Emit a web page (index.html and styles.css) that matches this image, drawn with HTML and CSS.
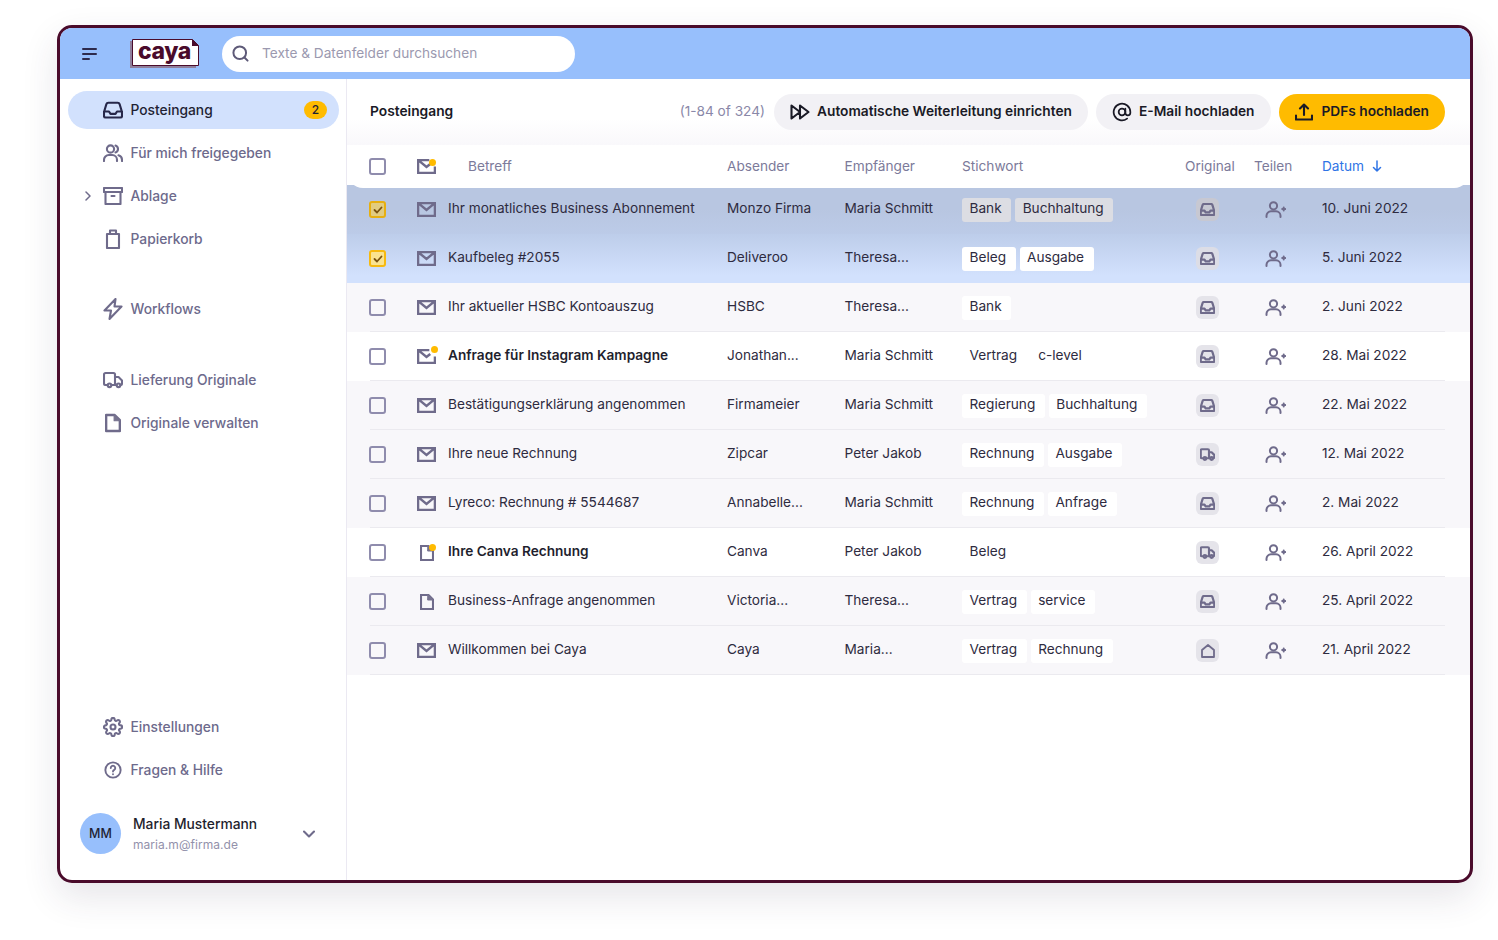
FILE: index.html
```html
<!DOCTYPE html>
<html lang="de">
<head>
<meta charset="utf-8">
<title>caya</title>
<link rel="stylesheet" href="styles.css">
</head>
<body>
<svg class="defs" width="0" height="0" aria-hidden="true">
  <symbol id="i-inbox" viewBox="0 0 20 17"><path d="M1 10.500 3.400 2.600A2 2 0 0 1 5.300 1.200h9.400a2 2 0 0 1 1.900 1.400L19 10.500v4a1.500 1.500 0 0 1-1.500 1.500h-15A1.500 1.500 0 0 1 1 14.500z M1 10h5l1.500 2.400h5L14 10h5"/></symbol>
  <symbol id="i-users" viewBox="0 0 20 18"><circle cx="7.500" cy="5" r="3.600"/><path d="M1 17v-1.200A4.800 4.800 0 0 1 5.800 11h3.400A4.800 4.800 0 0 1 14 15.800V17M12.500 1.500a3.700 3.700 0 0 1 0 7M15.500 11.300A4.800 4.800 0 0 1 19 15.800V17"/></symbol>
  <symbol id="i-archive" viewBox="0 0 20 18"><path d="M1 1h18v4H1zM2.500 5v12h15V5M8.500 9h3"/></symbol>
  <symbol id="i-trash" viewBox="0 0 16 20"><path d="M2 5h12v14H2zM5 5V1.500h6V5"/></symbol>
  <symbol id="i-bolt" viewBox="0 0 20 22"><path d="M12.500 1 1.500 12.500h6.500L6.500 21l12-12.500h-7z"/></symbol>
  <symbol id="i-truck" viewBox="0 0 20 16"><path d="M4.500 13H2.500A1.500 1.500 0 0 1 1 11.500v-9A1.500 1.500 0 0 1 2.500 1h8A1.500 1.500 0 0 1 12 2.500V13H8.500M12 5h3.500L19 8.500v3a1.500 1.500 0 0 1-1.500 1.500H17.500M13.500 13H12"/><circle cx="6.500" cy="13.300" r="1.800"/><circle cx="15.500" cy="13.300" r="1.800"/></symbol>
  <symbol id="i-doc" viewBox="0 0 14 16"><path d="M1 1h7.500L13 5.500V15H1z"/><path d="M8 1 13 6H8z" fill="#77738f" stroke="#77738f" stroke-width="1"/></symbol>
  <symbol id="i-gear" viewBox="0 0 24 24"><circle cx="12" cy="12" r="3"/><path d="M19.400 15a1.650 1.650 0 0 0 .33 1.820l.06.06a2 2 0 0 1 0 2.830 2 2 0 0 1-2.830 0l-.06-.06a1.650 1.650 0 0 0-1.820-.33 1.650 1.650 0 0 0-1 1.510V21a2 2 0 0 1-2 2 2 2 0 0 1-2-2v-.09A1.650 1.650 0 0 0 9 19.400a1.650 1.650 0 0 0-1.820.33l-.06.06a2 2 0 0 1-2.830 0 2 2 0 0 1 0-2.830l.06-.06a1.650 1.650 0 0 0 .33-1.820 1.650 1.650 0 0 0-1.510-1H3a2 2 0 0 1-2-2 2 2 0 0 1 2-2h.09A1.650 1.650 0 0 0 4.600 9a1.650 1.650 0 0 0-.33-1.820l-.06-.06a2 2 0 0 1 0-2.830 2 2 0 0 1 2.830 0l.06.06a1.650 1.650 0 0 0 1.820.33H9a1.650 1.650 0 0 0 1-1.510V3a2 2 0 0 1 2-2 2 2 0 0 1 2 2v.09a1.650 1.650 0 0 0 1 1.510 1.650 1.650 0 0 0 1.820-.33l.06-.06a2 2 0 0 1 2.830 0 2 2 0 0 1 0 2.830l-.06.06a1.650 1.650 0 0 0-.33 1.820V9a1.650 1.650 0 0 0 1.510 1H21a2 2 0 0 1 2 2 2 2 0 0 1-2 2h-.09a1.650 1.650 0 0 0-1.510 1z"/></symbol>
  <symbol id="i-help" viewBox="0 0 20 20"><circle cx="10" cy="10" r="8.500"/><path d="M7.500 7.800a2.500 2.500 0 1 1 3.800 2.100c-.9.500-1.300 1-1.300 1.900M10 14.600v.1"/></symbol>
  <symbol id="i-mail" viewBox="0 0 20 16"><path d="M1 1h18v14H1zM1.500 1.500 10 8.500l8.500-7"/></symbol>
  <symbol id="i-mailnew" viewBox="0 0 20 16"><path d="M13 1H1v14h18V8M1.500 1.500 10 8.500l4-3.200"/></symbol>
  <symbol id="i-userplus" viewBox="0 0 21 17"><circle cx="8.500" cy="4.800" r="3.600"/><path d="M1.500 16v-1.200A4.500 4.500 0 0 1 6 10.300h5a4.500 4.500 0 0 1 4.500 4.500V16M18.700 6.500v3M17.200 8h3"/></symbol>
  <symbol id="i-home" viewBox="0 0 14 14"><path d="M1 6 7 1l6 5v7H1z"/></symbol>
  <symbol id="i-forward" viewBox="0 0 20 16"><path d="M1.500 1.500 10 8l-8.500 6.500zM10 1.500 18.500 8 10 14.500z"/></symbol>
  <symbol id="i-at" viewBox="0 0 24 24"><circle cx="12" cy="12" r="4"/><path d="M16 8v5a3 3 0 0 0 6 0v-1a10 10 0 1 0-3.920 7.940"/></symbol>
  <symbol id="i-upload" viewBox="0 0 18 18"><path d="M9 12V2M5 5.500 9 1.500l4 4M1 12.500V16.500h16V12.500"/></symbol>
</svg>

<div class="app">
  <header class="topbar">
    <button class="menu-btn" type="button" aria-label="Menü"><span></span><span></span><span class="short"></span></button>
    <div class="logo">
      <svg class="logo-sheet" viewBox="0 0 70 31" aria-hidden="true">
        <path class="sheet-back" d="M0 3h3v25h63v2H0z"/>
        <path class="sheet-front" d="M2.500 1.500h60l6 6v20h-66z"/>
        <path class="sheet-fold" d="M62 1 69 8h-7z"/>
      </svg>
      <span class="logo-text">caya</span>
    </div>
    <div class="search">
      <svg class="icon search-icon" viewBox="0 0 18 18"><circle cx="8.200" cy="8.200" r="6.700"/><path d="m13.200 13.200 3.300 3.300"/></svg>
      <span class="search-text">Texte &amp; Datenfelder durchsuchen</span>
    </div>
  </header>

  <div class="body">
    <aside class="sidebar">
      <nav class="nav-group">
        <a class="nav-item active"><svg class="icon nav-icon"><use href="#i-inbox"/></svg><span>Posteingang</span><b class="count">2</b></a>
        <a class="nav-item"><svg class="icon nav-icon"><use href="#i-users"/></svg><span>Für mich freigegeben</span></a>
        <a class="nav-item"><svg class="icon caret" viewBox="0 0 6 10"><path d="m1 1 4 4-4 4"/></svg><svg class="icon nav-icon"><use href="#i-archive"/></svg><span>Ablage</span></a>
        <a class="nav-item"><svg class="icon nav-icon narrow"><use href="#i-trash"/></svg><span>Papierkorb</span></a>
      </nav>
      <nav class="nav-group wide-gap">
        <a class="nav-item"><svg class="icon nav-icon tall"><use href="#i-bolt"/></svg><span>Workflows</span></a>
      </nav>
      <nav class="nav-group">
        <a class="nav-item"><svg class="icon nav-icon"><use href="#i-truck"/></svg><span>Lieferung Originale</span></a>
        <a class="nav-item"><svg class="icon nav-icon narrow"><use href="#i-doc"/></svg><span>Originale verwalten</span></a>
      </nav>
      <nav class="nav-group bottom">
        <a class="nav-item"><svg class="icon nav-icon gear"><use href="#i-gear"/></svg><span>Einstellungen</span></a>
        <a class="nav-item"><svg class="icon nav-icon"><use href="#i-help"/></svg><span>Fragen &amp; Hilfe</span></a>
      </nav>
      <div class="user">
        <div class="avatar">MM</div>
        <div class="user-text">
          <div class="user-name">Maria Mustermann</div>
          <div class="user-mail">maria.m@firma.de</div>
        </div>
        <svg class="icon chevron" viewBox="0 0 12 8"><path d="m1 1.500 5 5 5-5"/></svg>
      </div>
    </aside>

    <main class="main">
      <div class="toolbar">
        <h1 class="title">Posteingang</h1>
        <span class="range">(1-84 of 324)</span>
        <button class="btn" type="button"><svg class="icon btn-forward"><use href="#i-forward"/></svg><span class="btn-label">Automatische Weiterleitung einrichten</span></button>
        <button class="btn" type="button"><svg class="icon btn-at"><use href="#i-at"/></svg><span class="btn-label">E-Mail hochladen</span></button>
        <button class="btn primary" type="button"><svg class="icon btn-up"><use href="#i-upload"/></svg><span class="btn-label">PDFs hochladen</span></button>
      </div>

      <div class="table">
        <div class="row head">
          <span class="check"></span>
          <span class="type"><svg class="icon mail"><use href="#i-mailnew"/></svg><i class="dot"></i></span>
          <span class="subject-head">Betreff</span>
          <span>Absender</span>
          <span>Empfänger</span>
          <span>Stichwort</span>
          <span>Original</span>
          <span>Teilen</span>
          <span class="sorted">Datum <svg class="icon sort" viewBox="0 0 10 12"><path d="M5 1v10M1.500 7.500 5 11l3.500-3.500"/></svg></span>
        </div>

        <div class="row sel-a">
          <span class="check on"><svg class="tick" viewBox="0 0 10 8"><path d="m1.500 4 2.500 2.500 4.500-5"/></svg></span>
          <span class="type"><svg class="icon mail"><use href="#i-mail"/></svg></span>
          <span>Ihr monatliches Business Abonnement</span>
          <span>Monzo Firma</span>
          <span>Maria Schmitt</span>
          <span class="tags"><em>Bank</em><em>Buchhaltung</em></span>
          <span><span class="orig"><svg class="icon"><use href="#i-inbox"/></svg></span></span>
          <span class="share"><svg class="icon"><use href="#i-userplus"/></svg></span>
          <span>10. Juni 2022</span>
        </div>
        <div class="row sel-b">
          <span class="check on"><svg class="tick" viewBox="0 0 10 8"><path d="m1.500 4 2.500 2.500 4.500-5"/></svg></span>
          <span class="type"><svg class="icon mail"><use href="#i-mail"/></svg></span>
          <span>Kaufbeleg #2055</span>
          <span>Deliveroo</span>
          <span>Theresa...</span>
          <span class="tags"><em>Beleg</em><em>Ausgabe</em></span>
          <span><span class="orig"><svg class="icon"><use href="#i-inbox"/></svg></span></span>
          <span class="share"><svg class="icon"><use href="#i-userplus"/></svg></span>
          <span>5. Juni 2022</span>
        </div>
        <div class="row">
          <span class="check"></span>
          <span class="type"><svg class="icon mail"><use href="#i-mail"/></svg></span>
          <span>Ihr aktueller HSBC Kontoauszug</span>
          <span>HSBC</span>
          <span>Theresa...</span>
          <span class="tags"><em>Bank</em></span>
          <span><span class="orig"><svg class="icon"><use href="#i-inbox"/></svg></span></span>
          <span class="share"><svg class="icon"><use href="#i-userplus"/></svg></span>
          <span>2. Juni 2022</span>
        </div>
        <div class="row unread">
          <span class="check"></span>
          <span class="type"><svg class="icon mail"><use href="#i-mailnew"/></svg><i class="dot"></i></span>
          <span class="strong">Anfrage für Instagram Kampagne</span>
          <span>Jonathan...</span>
          <span>Maria Schmitt</span>
          <span class="tags"><em>Vertrag</em><em>c-level</em></span>
          <span><span class="orig"><svg class="icon"><use href="#i-inbox"/></svg></span></span>
          <span class="share"><svg class="icon"><use href="#i-userplus"/></svg></span>
          <span>28. Mai 2022</span>
        </div>
        <div class="row">
          <span class="check"></span>
          <span class="type"><svg class="icon mail"><use href="#i-mail"/></svg></span>
          <span>Bestätigungserklärung angenommen</span>
          <span>Firmameier</span>
          <span>Maria Schmitt</span>
          <span class="tags"><em>Regierung</em><em>Buchhaltung</em></span>
          <span><span class="orig"><svg class="icon"><use href="#i-inbox"/></svg></span></span>
          <span class="share"><svg class="icon"><use href="#i-userplus"/></svg></span>
          <span>22. Mai 2022</span>
        </div>
        <div class="row">
          <span class="check"></span>
          <span class="type"><svg class="icon mail"><use href="#i-mail"/></svg></span>
          <span>Ihre neue Rechnung</span>
          <span>Zipcar</span>
          <span>Peter Jakob</span>
          <span class="tags"><em>Rechnung</em><em>Ausgabe</em></span>
          <span><span class="orig"><svg class="icon"><use href="#i-truck"/></svg></span></span>
          <span class="share"><svg class="icon"><use href="#i-userplus"/></svg></span>
          <span>12. Mai 2022</span>
        </div>
        <div class="row">
          <span class="check"></span>
          <span class="type"><svg class="icon mail"><use href="#i-mail"/></svg></span>
          <span>Lyreco: Rechnung # 5544687</span>
          <span>Annabelle...</span>
          <span>Maria Schmitt</span>
          <span class="tags"><em>Rechnung</em><em>Anfrage</em></span>
          <span><span class="orig"><svg class="icon"><use href="#i-inbox"/></svg></span></span>
          <span class="share"><svg class="icon"><use href="#i-userplus"/></svg></span>
          <span>2. Mai 2022</span>
        </div>
        <div class="row unread">
          <span class="check"></span>
          <span class="type"><svg class="icon docicon"><use href="#i-doc"/></svg><i class="dot"></i></span>
          <span class="strong">Ihre Canva Rechnung</span>
          <span>Canva</span>
          <span>Peter Jakob</span>
          <span class="tags"><em>Beleg</em></span>
          <span><span class="orig"><svg class="icon"><use href="#i-truck"/></svg></span></span>
          <span class="share"><svg class="icon"><use href="#i-userplus"/></svg></span>
          <span>26. April 2022</span>
        </div>
        <div class="row">
          <span class="check"></span>
          <span class="type"><svg class="icon docicon"><use href="#i-doc"/></svg></span>
          <span>Business-Anfrage angenommen</span>
          <span>Victoria...</span>
          <span>Theresa...</span>
          <span class="tags"><em>Vertrag</em><em>service</em></span>
          <span><span class="orig"><svg class="icon"><use href="#i-inbox"/></svg></span></span>
          <span class="share"><svg class="icon"><use href="#i-userplus"/></svg></span>
          <span>25. April 2022</span>
        </div>
        <div class="row">
          <span class="check"></span>
          <span class="type"><svg class="icon mail"><use href="#i-mail"/></svg></span>
          <span>Willkommen bei Caya</span>
          <span>Caya</span>
          <span>Maria...</span>
          <span class="tags"><em>Vertrag</em><em>Rechnung</em></span>
          <span><span class="orig"><svg class="icon home"><use href="#i-home"/></svg></span></span>
          <span class="share"><svg class="icon"><use href="#i-userplus"/></svg></span>
          <span>21. April 2022</span>
        </div>
      </div>
    </main>
  </div>
</div>
</body>
</html>
```

FILE: styles.css
```css
* { box-sizing: border-box; }
html, body { margin: 0; height: 100%; }
body {
  padding: 25px 25px 57px 57px;
  background: #fff;
  font-family: Inter, "Liberation Sans", sans-serif;
  font-size: 13.650px;
  color: #2e2b40;
  overflow: hidden;
}
.defs { position: absolute; }
.icon { fill: none; stroke: #6f6b8b; stroke-width: 2.100; stroke-linejoin: round; stroke-linecap: round; display: block; }

.app {
  width: 1416px;
  height: 858px;
  border: 3px solid #4a0b2b;
  border-radius: 15px;
  display: flex;
  flex-direction: column;
  overflow: hidden;
  background: #fff;
  box-shadow: 0 14px 36px rgba(50, 40, 70, .12);
}

/* top bar */
.topbar {
  height: 51px;
  flex: none;
  background: #97bffc;
  display: flex;
  align-items: center;
  padding-left: 22px;
}
.menu-btn { width: 15px; padding: 0; border: 0; background: none; display: flex; flex-direction: column; gap: 3px; margin-top: 1px; }
.menu-btn span { display: block; height: 2px; width: 15px; background: #2d2a4c; border-radius: 1px; }
.menu-btn span.short { width: 8px; }
.logo { position: relative; width: 70px; height: 31px; margin-left: 33px; flex: none; }
.logo-sheet { width: 70px; height: 31px; display: block; }
.sheet-back { fill: #8f7f9c; }
.sheet-front { fill: #fff; stroke: #4a0b2b; stroke-width: 1; }
.sheet-fold { fill: #4a0b2b; }
.logo-text {
  position: absolute;
  left: 8px; top: 0;
  font-weight: 800;
  font-size: 23px;
  line-height: 27px;
  letter-spacing: -.4px;
  color: #4a0b2b;
}
.search {
  width: 353px;
  height: 36px;
  margin-left: 22px;
  background: #fff;
  border-radius: 18px;
  display: flex;
  align-items: center;
  padding-left: 10px;
}
.search-icon { width: 17px; height: 17px; stroke: #5e5a78; }
.search-text { margin-left: 13px; padding-bottom: 2px; color: #9b99af; }

/* layout */
.body { flex: 1; display: flex; min-height: 0; }
.sidebar {
  width: 287px;
  flex: none;
  border-right: 1px solid #ebe9f2;
  padding: 12px 7px 26px 8px;
  display: flex;
  flex-direction: column;
}
.nav-group { display: flex; flex-direction: column; gap: 5px; margin-bottom: 32px; }
.nav-group.wide-gap { margin-bottom: 33px; }
.nav-group.bottom { margin-top: auto; margin-bottom: 24px; }
.nav-item {
  height: 38px;
  border-radius: 19px;
  display: flex;
  align-items: center;
  position: relative;
  padding-left: 62.500px;
  padding-bottom: 1px;
  color: #6d6a8c;
  font-size: 13.800px;
  font-weight: 500;
}
.nav-item.active { background: #d2e1fd; color: #1f1f33; }
.nav-item.active .icon { stroke: #27284a; }
.nav-icon { position: absolute; left: 35px; top: 10px; width: 20px; height: 18px; }
.nav-icon.narrow { left: 37px; top: 9px; width: 16px; height: 20px; }
.nav-icon.tall { left: 35px; top: 8px; width: 20px; height: 22px; }
.nav-icon.gear { left: 35px; top: 9px; width: 20px; height: 20px; stroke-width: 2.500; }
.caret { position: absolute; left: 17px; top: 14px; width: 6px; height: 10px; stroke-width: 1.500; }
.count {
  position: absolute;
  right: 12px; top: 10px;
  width: 23px; height: 18px;
  border-radius: 9px;
  background: #ffbb00;
  color: #1f1f33;
  font-size: 12px;
  font-weight: 500;
  text-align: center;
  line-height: 18px;
}
.user { display: flex; align-items: center; padding-left: 12px; height: 41px; }
.avatar {
  width: 41px; height: 41px;
  border-radius: 50%;
  background: #97bffc;
  color: #1f1f33;
  font-size: 12.500px;
  font-weight: 500;
  display: flex; align-items: center; justify-content: center;
  flex: none;
}
.user-text { margin-left: 12px; width: 170px; padding-top: 1px; }
.user-name { color: #1f1f2e; font-size: 13.800px; font-weight: 500; line-height: 18px; }
.user-mail { color: #9391ab; font-size: 12px; line-height: 17px; margin-top: 3px; letter-spacing: .05px; }
.chevron { width: 12px; height: 8px; }

/* main */
.main { flex: 1; min-width: 0; display: flex; flex-direction: column; }
.toolbar {
  height: 66px;
  flex: none;
  display: flex;
  align-items: center;
  gap: 8px;
  padding: 0 25px 0 23px;
  background: linear-gradient(#fff 60%, #f9f8fb);
}
.title { margin: 0 auto 2px 0; font-size: 13.770px; font-weight: 600; color: #1a1a26; }
.range { color: #8a88a8; margin-right: 1px; margin-bottom: 2px; }
.btn {
  height: 36px;
  border: 0;
  border-radius: 18px;
  background: #f2f1f5;
  display: flex;
  align-items: center;
  font: 600 13.730px Inter, "Liberation Sans", sans-serif;
  color: #1a1a26;
  padding: 0 16px;
}
.btn-label { padding-bottom: 2px; }
.btn .icon { stroke: #1a1a26; flex: none; }
.btn-forward { width: 20px; height: 16px; margin-right: 7px; }
.btn-at { width: 20px; height: 20px; margin-right: 7px; }
.btn-up { width: 18px; height: 18px; margin-right: 9px; }
.btn.primary { background: #ffbb00; }

/* table */
.table { display: flex; flex-direction: column; }
.row {
  height: 49px;
  display: grid;
  grid-template-columns: 48px 31px 279px 117.500px 117.500px 223px 69px 68px 1fr;
  align-items: center;
  padding-left: 22px;
  position: relative;
  background: linear-gradient(#ebeaef, #ebeaef) 23px 100% / 1075px 1px no-repeat, #f8f7fa;
}
.row > span { padding-bottom: 4px; }
.row.unread { background: linear-gradient(#ebeaef, #ebeaef) 23px 100% / 1075px 1px no-repeat, #fff; }
.row.sel-a { background: linear-gradient(#b8c6e1 50%, #bccbe8); }
.row.sel-b { background: linear-gradient(#bdcdea, #d2e1fd 85%); }
.row.head {
  height: 43px;
  margin-bottom: -3px;
  z-index: 1;
  background: #fff;
  border-radius: 16px;
  color: #7c7a9a;
}
.row.head > span { padding-bottom: 2px; }
.row.head > .check, .row.head > .type { padding: 0; }
.row.head > .subject-head { padding-left: 20px; }
.sorted { color: #2f74e6; display: flex; align-items: center; gap: 8px; }
.sort { width: 10px; height: 12px; stroke: #2f74e6; stroke-width: 1.500; }
.strong { font-weight: 600; color: #1f1f2e; }

.row > .check {
  width: 17px; height: 17px;
  padding: 0;
  border: 2px solid #8f8cad;
  border-radius: 3px;
  display: flex; align-items: center; justify-content: center;
}
.row > .check.on { background: #fbe38f; border-color: #f7b90f; }
.row.sel-a > .check.on { background: #e2cc80; border-color: #e7af10; }
.tick { width: 10px; height: 8px; fill: none; stroke: #7a5310; stroke-width: 1.800; stroke-linecap: round; stroke-linejoin: round; }

.row > .type { position: relative; display: block; width: 19px; height: 15px; padding: 0; }
.mail { width: 19px; height: 15px; stroke-width: 2.600; stroke-linecap: butt; stroke-linejoin: miter; }
.docicon { width: 14px; height: 16px; margin-left: 3px; stroke-width: 2.100; stroke-linejoin: miter; }
.dot {
  position: absolute;
  right: -1.500px; top: -3.500px;
  width: 7px; height: 7px;
  border-radius: 50%;
  background: #ffbb00;
}
.head .dot { right: 0; top: 0; }
.docicon + .dot { right: 0; top: -1.500px; }
.row > .tags { display: flex; gap: 4px; padding: 0; }
.tags em {
  font-style: normal;
  height: 24px;
  line-height: 21px;
  padding: 0 9.500px 0 7.500px;
  background: #fff;
  border-radius: 3px;
}
.sel-a .tags em { background: #dcdde3; }
.orig {
  display: flex; align-items: center; justify-content: center;
  width: 23px; height: 23px;
  margin-left: 11px;
  margin-top: 4px;
  border-radius: 6px;
  background: #e5e4ea;
}
.sel-a .orig { background: #c7c8d2; }
.sel-b .orig { background: #dcdde6; }
.orig .icon { width: 15px; height: 13px; stroke-width: 2.900; }
.orig .icon.home { width: 14px; height: 14px; stroke-width: 1.800; }
.row > .share { padding: 0 0 0 11px; }
.share .icon { width: 21px; height: 17px; stroke-width: 2; }
```
